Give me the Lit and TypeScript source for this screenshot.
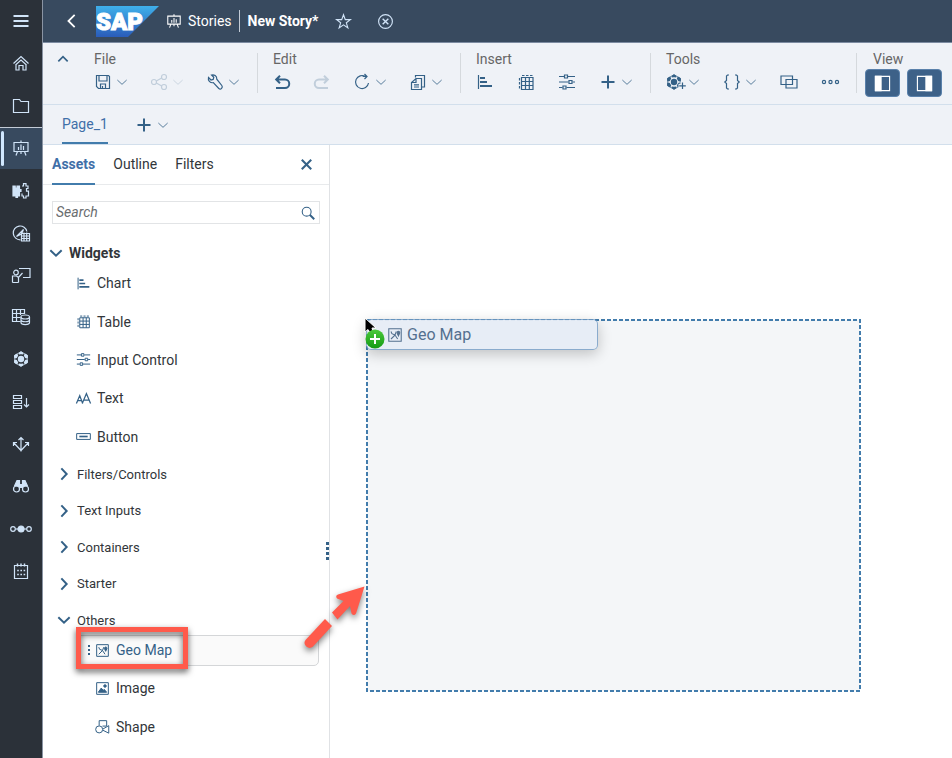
import { LitElement, html, svg, css, nothing, TemplateResult, SVGTemplateResult } from "lit";
import { customElement, property, state } from "lit/decorators.js";
import { classMap } from "lit/directives/class-map.js";

/* Stroke icons; every glyph is drawn in an 18 by 18 box. */
const flower = svg`
  <g fill="currentColor" stroke="none">
    <circle cx="9" cy="9" r="3.200"/>
    <path d="M6.800 2.700 9 1.200l2.200 1.500v1.800L9 4.300l-2.200.200z"/>
    <path d="M6.800 15.300 9 16.800l2.200-1.500v-1.800l-2.200.200-2.200-.200z"/>
    <path d="M2.200 5.200 4.600 3.700l1.500 1-.100 1.300-1.200 2L3.700 8.500 2 7.600z"/>
    <path d="M15.800 5.200 13.400 3.700l-1.500 1 .100 1.300 1.200 2 1.100.500L16 7.600z"/>
    <path d="M2.200 12.800l2.400 1.500 1.500-1L6 12l-1.200-2-1.100-.500L2 10.400z"/>
    <path d="M15.800 12.800l-2.400 1.500-1.500-1L12 12l1.200-2 1.100-.500 1.700.900z"/>
  </g>
  <path d="M9 1.800 15.300 5.300v7.400L9 16.200l-6.300-3.500V5.300z" stroke-width=".8"/>`;

const icons: Record<string, SVGTemplateResult> = {
  menu: svg`<path d="M1.500 4h15M1.500 9h15M1.500 14h15" stroke-width="2"/>`,
  home: svg`<path d="M1.500 9.500 9 2.500l7.500 7M4 10.500V16h3v-4.500h4V16h3v-5.500M3.500 11 9 6l5.500 5"/>`,
  folder: svg`<path d="M1.500 15.500v-13h6l1.500 2h7.500v11z"/>`,
  story: svg`<path d="M2 3.500h14v9H2zM9 3.500v-2M5.500 12.500 4 16.500M12.500 12.500l1.500 4M9 12.500v2.500M6.500 11V8M9 11V5.500M11.500 11V7"/>`,
  puzzle: svg`<path d="M1 5h2.200v2h1.800V5h2.500v3.500h1.500v2H7.500V15H5.500v1.500H4V15H1z" fill="currentColor"/><path d="M10 5h1.500V2.700h2.500V5H16v2.500h-1.500v2.600H16.500V15H14v2h-2.500v-2H10v-2.500"/>`,
  compass: svg`<path d="M8.500 15.800A6.900 6.900 0 1 1 14.900 7.500M4.500 12.500l7-7L9.500 10z"/><path d="M9.500 9.500h8v7.500h-8zM12 8.500V17M14.700 8.500V17M9.500 12h8M9.500 14.500h8"/>`,
  presenter: svg`<path d="M7 2.500h11v9h-7M.500 16.500V10h4l2 1.500 4-4.500M6.500 16.500V12M.500 16.500h6"/><circle cx="4" cy="6.500" r="2.300"/>`,
  data: svg`<path d="M8.500 13.500H.500v-12h12V6M.500 5.500h12M.500 9.500H8M4.500 1.500v12M8.500 1.500V7"/><path d="M9 9v5.500c0 2.700 8.500 2.700 8.500 0V9M9 11.700c0 2.700 8.500 2.700 8.500 0"/><ellipse cx="13.200" cy="9" rx="4.300" ry="2"/>`,
  flower,
  stack: svg`<path d="M1.500 2.500h8v3h-8zM1.500 7.500h8v3h-8zM1.500 12.500h8v3h-8zM14.500 5v9M12 11.500l2.500 2.500 2.500-2.500"/>`,
  diverge: svg`<path d="M9 16.500V3M6.500 5 9 2.500 11.500 5M9 15.500 1.500 7.500M1.500 11V7.500H5M9 15.500l7.500-8M13 7.500h3.500V11"/>`,
  binoculars: svg`<circle cx="4.500" cy="12" r="3"/><circle cx="13.500" cy="12" r="3"/><path d="M2.500 9 5 3.500h2.500V10M15.500 9 13 3.500h-2.500V10M7.500 7.500h3v3h-3z" fill="currentColor"/>`,
  nodes: svg`<circle cx="1" cy="9" r="2.300"/><circle cx="17" cy="9" r="2.300"/><circle cx="9" cy="9" r="3" fill="currentColor"/><path d="M3.500 9h11"/>`,
  calendar: svg`<path d="M2.500 3.500h13v13h-13z"/><path d="M5.500 1.500v3M9 1.500v3M12.500 1.500v3" stroke-width="1.500"/><path d="M5.200 8.500h8M5.200 12.500h8" stroke-dasharray="1.600 1.600" stroke-width="1.600"/>`,
  star: svg`<path d="m9 1.800 1.900 5.200h5.400L12 10.400l1.600 5.400L9 12.600l-4.600 3.200L6 10.400 1.700 7h5.400z"/>`,
  closeCircle: svg`<circle cx="9" cy="9" r="7.300"/><path d="m6 6 6 6M12 6l-6 6" stroke-width="1.500"/>`,
  save: svg`<path d="M2.500 2.500h12l1 1v12h-11l-2-2zM5 2.500V8h8V2.500M6.500 15.500V11h5v4.500M8.500 15v-2"/>`,
  share: svg`<circle cx="4" cy="9" r="2.500"/><circle cx="14" cy="4" r="2.500"/><circle cx="14" cy="14" r="2.500"/><path d="m6.300 8 5.400-3M6.300 10l5.400 3"/>`,
  wrench: svg`<path d="M2.500 4.500 5 7l2.200-.600.600-2.200L5.500 2c2.500-.800 5.500.800 5.300 4.200l5 6.300c1.500 2-1 4.500-3 3l-5.500-5.800C4 10 1.700 7.500 2.500 4.500z"/>`,
  undo: svg`<path d="M3.500 6.500H12a4 4 0 0 1 0 8.500H3M7 2.800 3.200 6.500 7 10.200" stroke-width="2"/>`,
  redo: svg`<path d="M14.500 6.500H6A4 4 0 0 0 6 15h9M11 2.800l3.800 3.700L11 10.200" stroke-width="2"/>`,
  refresh: svg`<path d="M12.500 3.500A6.500 6.500 0 1 0 15.500 10M9.500 3.500h4M11.500 1l2.500 2.500-2.500 2.500"/>`,
  copy: svg`<path d="M6.500 4.500v-2h9v11.500H13M7 5.500h5.500v11h-10V9.500zM7 5.500v4H2.500M5 11.800h5M5 14h5"/>`,
  chart: svg`<path d="M2.500 2v14"/><path d="M4 5h5M4 9h7M4 13h12" stroke-width="2"/>`,
  table: svg`<path d="M4.500 4.500h11.500v12H4.500zM4.500 8.500H16M4.500 12.500H16M8.500 4.500v12M12.300 4.500v12"/><path d="M5 2.500h11" stroke-dasharray="2.500 1.500"/><path d="M2.500 5v11.500" stroke-dasharray="2.500 1.500"/>`,
  sliders: svg`<path d="M1 3.500h5M10 3.500h7M1 9h9.500M14.500 9H17M1 14.500h3.500M8.500 14.500H17"/><path d="M6.500 2h3v3h-3zM11 7.500h3v3h-3zM5 13h3v3H5z"/>`,
  plus: svg`<path d="M9 2.500v13M2.500 9h13" stroke-width="2"/>`,
  flowerPlus: svg`<g transform="translate(-1 0)">${flower}</g><path d="M16.500 8.800v8M12.500 12.800h8" stroke="#eff2f7" stroke-width="4"/><path d="M16.500 9.500v6.500M13.200 12.800h6.600"/>`,
  braces: svg`<path d="M6 2H4.500L3.500 3v4.500L1.800 9l1.700 1.500V15l1 1H6M12 2h1.500l1 1v4.500L16.200 9l-1.700 1.500V15l-1 1H12"/>`,
  overlap: svg`<path d="M1 3h11.500v8.500H1zM6 6.500h11v8.500H6z"/>`,
  more: svg`<circle cx="3" cy="9" r="1.600"/><circle cx="9.500" cy="9" r="1.600"/><circle cx="16" cy="9" r="1.600"/>`,
  leftPane: svg`<path d="M1.500 1.500h15v15h-15z"/><path d="M1.500 1.500h6v15h-6z" fill="currentColor"/>`,
  rightPane: svg`<path d="M1.500 1.500h15v15h-15z"/><path d="M10.500 1.500h6v15h-6z" fill="currentColor"/>`,
  down: svg`<path d="m2 6 7 6.500L16 6"/>`,
  up: svg`<path d="m2 12.500 7-7 7 7" stroke-width="2.500"/>`,
  openDown: svg`<path d="m.500 5 8.500 8 8.500-8" stroke-width="3"/>`,
  openRight: svg`<path d="m5 .500 8 8.500-8 8.500" stroke-width="3"/>`,
  back: svg`<path d="M12 2 5 9l7 7" stroke-width="2"/>`,
  close: svg`<path d="m4 4 10 10M14 4 4 14" stroke-width="2.200"/>`,
  search: svg`<circle cx="7.500" cy="7.500" r="5"/><path d="m11 11 5 5" stroke-width="2.200"/>`,
  font: svg`<path d="M.500 15 4.500 5.500 8 15M2 11.500h5M7.500 15 12.500 3l5 12M9.300 11h6.500" stroke-width="1.500"/>`,
  button: svg`<path d="M.800 5.500h16.400v7H.800z"/><path d="M4 9h10" stroke-width="2"/>`,
  map: svg`<path d="M2 2h14v14H2z"/><path d="m4.500 5 1 2.500L9 9l1.500-4M4.500 13.500 9 9l3 4.500"/><path d="M12.800 10 11.500 7a1.500 1.500 0 1 1 2.700 0z" fill="currentColor"/>`,
  image: svg`<path d="M2 2h14v14H2z"/><path d="m4 13.500 3.500-5 2.500 3 1-1.500 3 3.500z" fill="currentColor"/><circle cx="12" cy="6" r="1.500" fill="currentColor"/>`,
  shape: svg`<path d="M5 8V2h9v6.500h-5M9.500 12l7-4v9l-7-3.500"/><circle cx="5" cy="12.500" r="4.200"/>`,
};

@customElement("ui-icon")
export class UiIcon extends LitElement {
  @property() name = "";
  @property({ type: Number }) size = 18;

  static styles = css`
    :host { display: inline-flex; flex: none; }
    .glyph { display: block; overflow: visible; fill: none; stroke: currentColor; stroke-width: 1.2; }
  `;

  render() {
    return html`<svg class="glyph" width=${this.size} height=${this.size} viewBox="0 0 18 18" aria-hidden="true">${icons[this.name]}</svg>`;
  }
}

type Tool = { icon: string; label: string; menu?: boolean; disabled?: boolean };
type Group = { title: string; wide: boolean; tools: Tool[] };

@customElement("story-ribbon")
export class StoryRibbon extends LitElement {
  private groups: Group[] = [
    { title: "File", wide: false, tools: [
      { icon: "save", label: "Save", menu: true },
      { icon: "share", label: "Share", menu: true, disabled: true },
      { icon: "wrench", label: "Settings", menu: true },
    ] },
    { title: "Edit", wide: false, tools: [
      { icon: "undo", label: "Undo" },
      { icon: "redo", label: "Redo", disabled: true },
      { icon: "refresh", label: "Refresh", menu: true },
      { icon: "copy", label: "Copy", menu: true },
    ] },
    { title: "Insert", wide: true, tools: [
      { icon: "chart", label: "Chart" },
      { icon: "table", label: "Table" },
      { icon: "sliders", label: "Input Control" },
      { icon: "plus", label: "Add", menu: true },
    ] },
    { title: "Tools", wide: true, tools: [
      { icon: "flowerPlus", label: "Add data", menu: true },
      { icon: "braces", label: "Scripting", menu: true },
      { icon: "overlap", label: "Linked analysis" },
      { icon: "more", label: "More" },
    ] },
  ];

  static styles = css`
    :host { display: flex; height: 62px; box-sizing: border-box; background: #eff2f7; border-bottom: 1px solid #d2dfec; overflow: hidden; }
    button { font: inherit; color: #346187; background: none; border: 0; padding: 0; margin: 0; cursor: pointer; display: inline-flex; align-items: center; gap: 4px; }
    button:disabled { color: #c1cedb; cursor: default; }
    .collapse { width: 36px; height: 32px; flex: none; justify-content: flex-end; padding-right: 10px; box-sizing: border-box; }
    .group { display: flex; flex-direction: column; flex: none; height: 40px; margin-top: 10px; padding: 0 17px 0 15px; border-right: 1px solid #d5d9dd; }
    .group.last { border: 0; padding: 0 8px; }
    .title { font-size: 14px; line-height: 12px; font-weight: 400; color: #666; margin: 0; }
    .tools { display: flex; gap: 22px; margin-top: 7px; height: 20px; }
    .wide .tools { gap: 23px; }
    .last .title { padding-left: 8px; }
    .last .tools { gap: 7px; margin-top: 4px; height: 28px; }
    .toggle { width: 35px; height: 28px; box-sizing: border-box; justify-content: center; background: #3d6188; border: 1px solid #5a81ab; border-radius: 4px; color: #fff; }
  `;

  render() {
    return html`
      <button class="collapse" aria-label="Collapse toolbar"><ui-icon name="up" size="12"></ui-icon></button>
      ${this.groups.map((g) => html`
        <section class=${classMap({ group: true, wide: g.wide })}>
          <h2 class="title">${g.title}</h2>
          <div class="tools">
            ${g.tools.map((t) => html`
              <button aria-label=${t.label} ?disabled=${t.disabled ?? false}>
                <ui-icon name=${t.icon}></ui-icon>
                ${t.menu ? html`<ui-icon name="down" size="12"></ui-icon>` : nothing}
              </button>`)}
          </div>
        </section>`)}
      <section class="group last">
        <h2 class="title">View</h2>
        <div class="tools">
          <button class="toggle" aria-label="Left panel" aria-pressed="true"><ui-icon name="leftPane" size="17"></ui-icon></button>
          <button class="toggle" aria-label="Right panel" aria-pressed="true"><ui-icon name="rightPane" size="17"></ui-icon></button>
        </div>
      </section>`;
  }
}

@customElement("asset-panel")
export class AssetPanel extends LitElement {
  @state() private tab = "Assets";

  static styles = css`
    :host { display: block; position: relative; box-sizing: border-box; width: 287px; flex: none; background: #fff; border-right: 1px solid #e0e2e5; font-size: 14px; color: #32363a; }
    button { font: inherit; color: inherit; background: none; border: 0; padding: 0; margin: 0; cursor: pointer; text-align: left; }
    .tabs { display: flex; gap: 18px; height: 40px; box-sizing: border-box; padding: 0 14px 0 9px; border-bottom: 1px solid #e8eaec; }
    .tab { height: 40px; box-sizing: border-box; border-bottom: 2px solid transparent; }
    .tab.on { color: #3f6fa8; font-weight: 700; border-color: #427cac; }
    .close { margin-left: auto; color: #346187; display: flex; align-items: center; }
    .search { display: flex; align-items: center; height: 23px; box-sizing: border-box; margin: 16px 9px 0; border: 1px solid #e2e4e6; padding-right: 3px; color: #346187; }
    .search input { flex: 1; min-width: 0; font: italic 14px/20px Roboto, "Liberation Sans", sans-serif; border: 0; outline: 0; padding: 0 3px 1px; color: #32363a; background: none; }
    .search input::placeholder { color: #6a6d70; opacity: 1; }
    .head { display: flex; align-items: center; width: 100%; height: 22px; gap: 7px; padding-left: 7px; }
    .head.first { margin-top: 18px; font-weight: 700; }
    .head.sub { margin-top: 7px; padding-left: 15px; font-size: 13px; }
    .head ui-icon { color: #346187; }
    .list { display: grid; grid-auto-rows: 1fr; margin: 0; padding: 0; list-style: none; }
    .widgets { height: 192px; }
    .categories { height: 146px; }
    .others { height: 115px; }
    .item { display: flex; align-items: center; gap: 6px; padding-left: 33px; }
    .others .item { padding-left: 52px; }
    .item ui-icon { color: #346187; }
    .cat { display: flex; align-items: center; gap: 7px; padding-left: 15px; width: 100%; font-size: 13px; }
    .cat ui-icon { color: #346187; }
    .others .active { position: relative; padding: 0 10px 0 33px; }
    .card { position: relative; display: flex; align-items: center; flex: 1; height: 31px; box-sizing: border-box; padding-left: 18px; gap: 6px; background: #fafafa; border: 1px solid #d4d6d8; border-radius: 5px; color: #346187; }
    .grip { position: absolute; left: 11px; top: 9px; width: 2px; height: 12px; background: repeating-linear-gradient(#346187 0 2px, transparent 2px 4px); }
    .marker { position: absolute; left: 33px; top: -4px; width: 112px; height: 42px; box-sizing: border-box; border: 5px solid #ff5a4b; filter: drop-shadow(0 3px 3px rgba(0, 0, 0, 0.65)); pointer-events: none; }
    .arrow { position: absolute; left: 256px; top: 436px; width: 72px; height: 76px; overflow: visible; filter: drop-shadow(0 3px 3px rgba(0, 0, 0, 0.5)); z-index: 2; pointer-events: none; }
    .splitter { position: absolute; right: 0; top: 397px; width: 3px; height: 18px; background: repeating-linear-gradient(#346187 0 3px, transparent 3px 5px); }
  `;

  private widgets = [
    ["chart", "Chart"], ["table", "Table"], ["sliders", "Input Control"], ["font", "Text"], ["button", "Button"],
  ];

  render() {
    return html`
      <div class="tabs" role="tablist">
        ${["Assets", "Outline", "Filters"].map((t) => html`
          <button role="tab" class=${classMap({ tab: true, on: t === this.tab })} aria-selected=${t === this.tab} @click=${() => (this.tab = t)}>${t}</button>`)}
        <button class="close" aria-label="Close panel"><ui-icon name="close" size="17"></ui-icon></button>
      </div>
      <label class="search">
        <input type="text" placeholder="Search" aria-label="Search">
        <ui-icon name="search" size="16"></ui-icon>
      </label>
      <button class="head first" aria-expanded="true"><ui-icon name="openDown" size="12"></ui-icon>Widgets</button>
      <ul class="list widgets">
        ${this.widgets.map(([icon, label]) => html`<li class="item"><ui-icon name=${icon} size="15"></ui-icon>${label}</li>`)}
      </ul>
      <div class="list categories">
        ${["Filters/Controls", "Text Inputs", "Containers", "Starter"].map((c) => html`
          <button class="cat" aria-expanded="false"><ui-icon name="openRight" size="12"></ui-icon>${c}</button>`)}
      </div>
      <button class="head sub" aria-expanded="true"><ui-icon name="openDown" size="12"></ui-icon>Others</button>
      <ul class="list others">
        <li class="item active">
          <div class="card"><span class="grip"></span><ui-icon name="map" size="15"></ui-icon>Geo Map</div>
          <span class="marker"></span>
        </li>
        <li class="item"><ui-icon name="image" size="15"></ui-icon>Image</li>
        <li class="item"><ui-icon name="shape" size="15"></ui-icon>Shape</li>
      </ul>
      <span class="splitter"></span>
      <svg class="arrow" viewBox="0 0 72 76" aria-hidden="true">
        <g fill="#ff5a4b">
          <path d="M26 38 33 45 14 65.500a5 5 0 0 1-7.500-6.500z"/>
          <path d="M65.500 5.500 57 32.500q-2 3-4.500 0L51 25 38.500 38.500 33 31.500 44.500 20l-6.500-2.500q-2-3 1-4z"/>
        </g>
      </svg>`;
  }
}

@customElement("app-root")
export class AppRoot extends LitElement {
  private nav: [string, string][] = [
    ["menu", "Menu"], ["home", "Home"], ["folder", "Files"], ["story", "Stories"], ["puzzle", "Applications"],
    ["compass", "Data Analyzer"], ["presenter", "Digital Boardroom"], ["data", "Datasets"], ["flower", "Modeler"],
    ["stack", "Dimensions"], ["diverge", "Allocations"], ["binoculars", "Insights"], ["nodes", "Data Actions"], ["calendar", "Calendar"],
  ];

  static styles = css`
    :host { display: flex; min-height: 100vh; font-family: Roboto, "Liberation Sans", sans-serif; font-size: 14px; color: #32363a; background: #fff; }
    button { font: inherit; color: inherit; background: none; border: 0; padding: 0; margin: 0; cursor: pointer; }
    .rail { width: 43px; flex: none; box-sizing: border-box; background: #2b3139; border-right: 1px solid #8a94a3; }
    .nav { display: grid; grid-auto-rows: 1fr; height: 592px; }
    .nav button { display: flex; align-items: center; justify-content: center; color: #d1e4f8; position: relative; }
    .nav .on { background: #384a5f; border-top: 1px solid #c3cbd6; }
    .nav .on::before { content: ""; position: absolute; left: 1px; top: 3px; bottom: 3px; width: 3px; border-radius: 2px; background: #d1e8ff; }
    .main { flex: 1; min-width: 0; display: flex; flex-direction: column; }
    .shell { display: flex; align-items: center; height: 43px; box-sizing: border-box; border-bottom: 1px solid #7c8ba1; background: #384a5f; color: #fff; }
    .back { width: 53px; display: flex; justify-content: center; padding-left: 5px; box-sizing: border-box; }
    .logo { display: block; margin-right: 7px; }
    .logo text { font: 900 24px Roboto, "Liberation Sans", sans-serif; fill: #fff; stroke: #fff; stroke-width: 1; }
    .crumb { display: flex; align-items: center; gap: 6px; color: #fff; text-decoration: none; padding-right: 7px; height: 22px; border-right: 1px solid #c3cbd6; }
    .name { margin: 0 17px 0 8px; font-size: 14px; font-weight: 700; }
    .ghost { display: flex; color: #d1e4f8; margin-right: 25px; }
    .pages { display: flex; height: 40px; box-sizing: border-box; padding-left: 19px; background: #eff2f7; border-bottom: 1px solid #d2dfec; color: #3f6fa8; }
    .page { height: 39px; box-sizing: border-box; border-bottom: 2px solid #427cac; }
    .add { display: flex; align-items: center; gap: 4px; margin-left: 27px; color: #346187; }
    .body { display: flex; flex: 1; }
    .canvas { position: relative; flex: 1; min-width: 0; overflow: hidden; }
    .drop { position: absolute; left: 36px; top: 174px; width: 495px; height: 373px; }
    .drop rect { fill: #f4f6f8; stroke: #427cac; stroke-width: 2; stroke-dasharray: 4 2; }
    .drag { position: absolute; left: 36px; top: 174px; width: 232px; height: 31px; box-sizing: border-box; display: flex; align-items: center; gap: 4px; padding-left: 20px; background: #e6ecf5f2; background-clip: padding-box; border: 1px solid #6f98c2cc; border-radius: 5px; box-shadow: 0 4px 14px rgba(0, 0, 0, 0.22); color: #54708f; font-size: 16px; }
    .cursor { position: absolute; left: 34px; top: 172px; }
  `;

  render(): TemplateResult {
    return html`
      <aside class="rail">
        <nav class="nav">
          ${this.nav.map(([icon, label]) => html`
            <button class=${classMap({ on: icon === "story" })} aria-label=${label}><ui-icon name=${icon}></ui-icon></button>`)}
        </nav>
      </aside>
      <div class="main">
        <header class="shell">
          <button class="back" aria-label="Back"><ui-icon name="back" size="16"></ui-icon></button>
          <svg class="logo" width="63" height="31" viewBox="0 0 63 31" role="img" aria-label="SAP">
            <defs><linearGradient id="sap" x1="0" y1="0" x2="0" y2="1"><stop offset="0" stop-color="#3fb0ea"/><stop offset="1" stop-color="#2a5cba"/></linearGradient></defs>
            <path d="M0 0h63L32 31H0z" fill="url(#sap)"/>
            <text x="0" y="24">SAP</text>
          </svg>
          <a class="crumb" href="#stories"><ui-icon name="story" size="16"></ui-icon>Stories</a>
          <h1 class="name">New Story*</h1>
          <button class="ghost" aria-label="Favorite"><ui-icon name="star" size="17"></ui-icon></button>
          <button class="ghost" aria-label="Close story"><ui-icon name="closeCircle" size="17"></ui-icon></button>
        </header>
        <story-ribbon></story-ribbon>
        <div class="pages">
          <button class="page">Page_1</button>
          <button class="add" aria-label="Add page"><ui-icon name="plus"></ui-icon><ui-icon name="down" size="12"></ui-icon></button>
        </div>
        <div class="body">
          <asset-panel></asset-panel>
          <main class="canvas">
            <svg class="drop" viewBox="0 0 495 373" aria-hidden="true"><rect x="1" y="1" width="493" height="371"/></svg>
            <div class="drag"><ui-icon name="map" size="16"></ui-icon>Geo Map</div>
            <svg class="cursor" width="24" height="34" viewBox="0 0 24 34" aria-hidden="true">
              <defs><linearGradient id="ok" x1="0" y1="0" x2="0" y2="1"><stop offset="0" stop-color="#4cc93a"/><stop offset="1" stop-color="#149a14"/></linearGradient></defs>
              <path d="M1 1v14l3-2.500 2 3 3-1-1-3.500h4z" fill="#000" stroke="#fff"/>
              <circle cx="11" cy="22" r="9.500" fill="url(#ok)"/>
              <path d="M11 17v10M6 22h10" stroke="#fff" stroke-width="2"/>
            </svg>
          </main>
        </div>
      </div>`;
  }
}
